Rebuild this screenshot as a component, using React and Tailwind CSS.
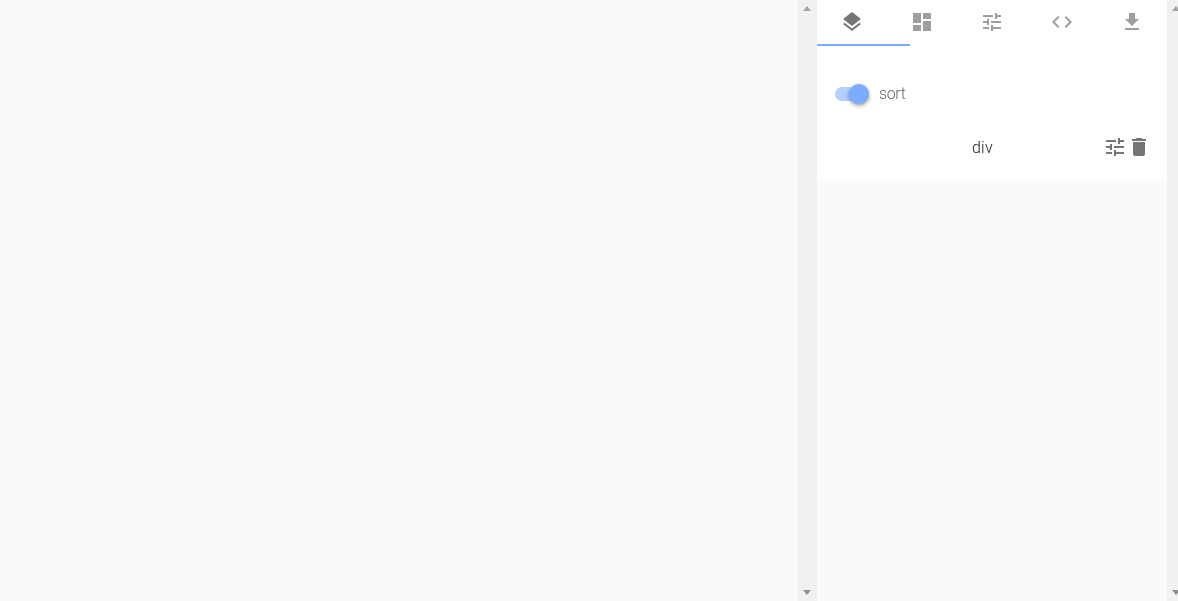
const Icon = ({ d, className }) => (
  <svg viewBox="0 0 24 24" className={className} fill="currentColor"><path d={d} /></svg>
);

const tune = "M3 17v2h6v-2H3zM3 5v2h10V5H3zm10 16v-2h8v-2h-8v-2h-2v6h2zM7 9v2H3v2h4v2h2V9H7zm14 4v-2H11v2h10zm-6-4h2V7h4V5h-4V3h-2v6z";
const tabs = [
  { d: "M11.99 18.54l-7.37-5.73L3 14.07l9 7 9-7-1.63-1.27-7.38 5.74zM12 16l7.36-5.73L21 9l-9-7-9 7 1.63 1.27L12 16z", c: "text-[#757575]" },
  { d: "M3 13h8V3H3v10zm0 8h8v-6H3v6zm10 0h8V11h-8v10zm0-18v6h8V3h-8z", c: "text-[#9e9e9e]" },
  { d: tune, c: "text-[#9e9e9e]" },
  { d: "M9.4 16.6L4.8 12l4.6-4.6L8 6l-6 6 6 6 1.4-1.4zm5.2 0l4.6-4.6-4.6-4.6L16 6l6 6-6 6-1.4-1.4z", c: "text-[#9e9e9e]" },
  { d: "M19 9h-4V3H9v6H5l7 7 7-7zM5 18v2h14v-2H5z", c: "text-[#9e9e9e]" },
];

const Scrollbar = ({ className }) => (
  <div className={"flex flex-col justify-between bg-[#f1f1f1] shrink-0 " + className}>
    <div className="w-[17px] h-[17px] flex items-center justify-center">
      <div className="w-0 h-0 border-x-[4px] border-x-transparent border-b-[5px] border-b-[#a3a3a3]" />
    </div>
    <div className="w-[17px] h-[17px] flex items-center justify-center">
      <div className="w-0 h-0 border-x-[4px] border-x-transparent border-t-[5px] border-t-[#8f8f8f]" />
    </div>
  </div>
);

export default function App() {
  return (
    <div className="flex h-[601px] w-[1178px] overflow-hidden bg-[#fafafa] font-['Roboto',sans-serif]">
      <div className="w-[798px] shrink-0" />
      <Scrollbar className="w-[19px]" />
      <div className="w-[350px] shrink-0 flex flex-col">
        <div className="bg-white h-[180px]">
          <div className="relative flex h-[46px]">
            {tabs.map((t, i) => (
              <div key={i} className="w-[70px] h-[44px] flex items-center justify-center">
                <Icon d={t.d} className={"w-6 h-6 " + t.c} />
              </div>
            ))}
            <div className="absolute left-0 bottom-0 w-[93px] h-[2px] bg-[#7aadff]" />
          </div>
          <div className="flex items-center h-[48px] mt-6 pl-[18px] gap-[10px]">
            <div className="relative w-[34px] h-[14px] rounded-full bg-[#b3d0ff]">
              <div className="absolute right-0 top-[-3px] w-5 h-5 rounded-full bg-[#7aadff] shadow-[0_2px_4px_rgba(0,0,0,0.3),0_1px_3px_rgba(0,0,0,0.15)]" />
            </div>
            <span className="text-base font-light tracking-[-0.4px] text-[#666666] will-change-transform">sort</span>
          </div>
          <div className="relative flex items-center h-[48px] mt-[5px] pr-[16px] justify-end">
            <span className="absolute left-[155px] top-[13px] text-base font-light text-[#222222] tracking-[0.2px] will-change-transform">div</span>
            <Icon d={tune} className="w-6 h-6 text-[#757575]" />
            <Icon d="M6 19c0 1.1.9 2 2 2h8c1.1 0 2-.9 2-2V7H6v12zM19 4h-3.5l-1-1h-5l-1 1H5v2h14V4z" className="w-6 h-6 text-[#757575]" />
          </div>
        </div>
      </div>
      <Scrollbar className="w-[17px]" />
    </div>
  );
}
